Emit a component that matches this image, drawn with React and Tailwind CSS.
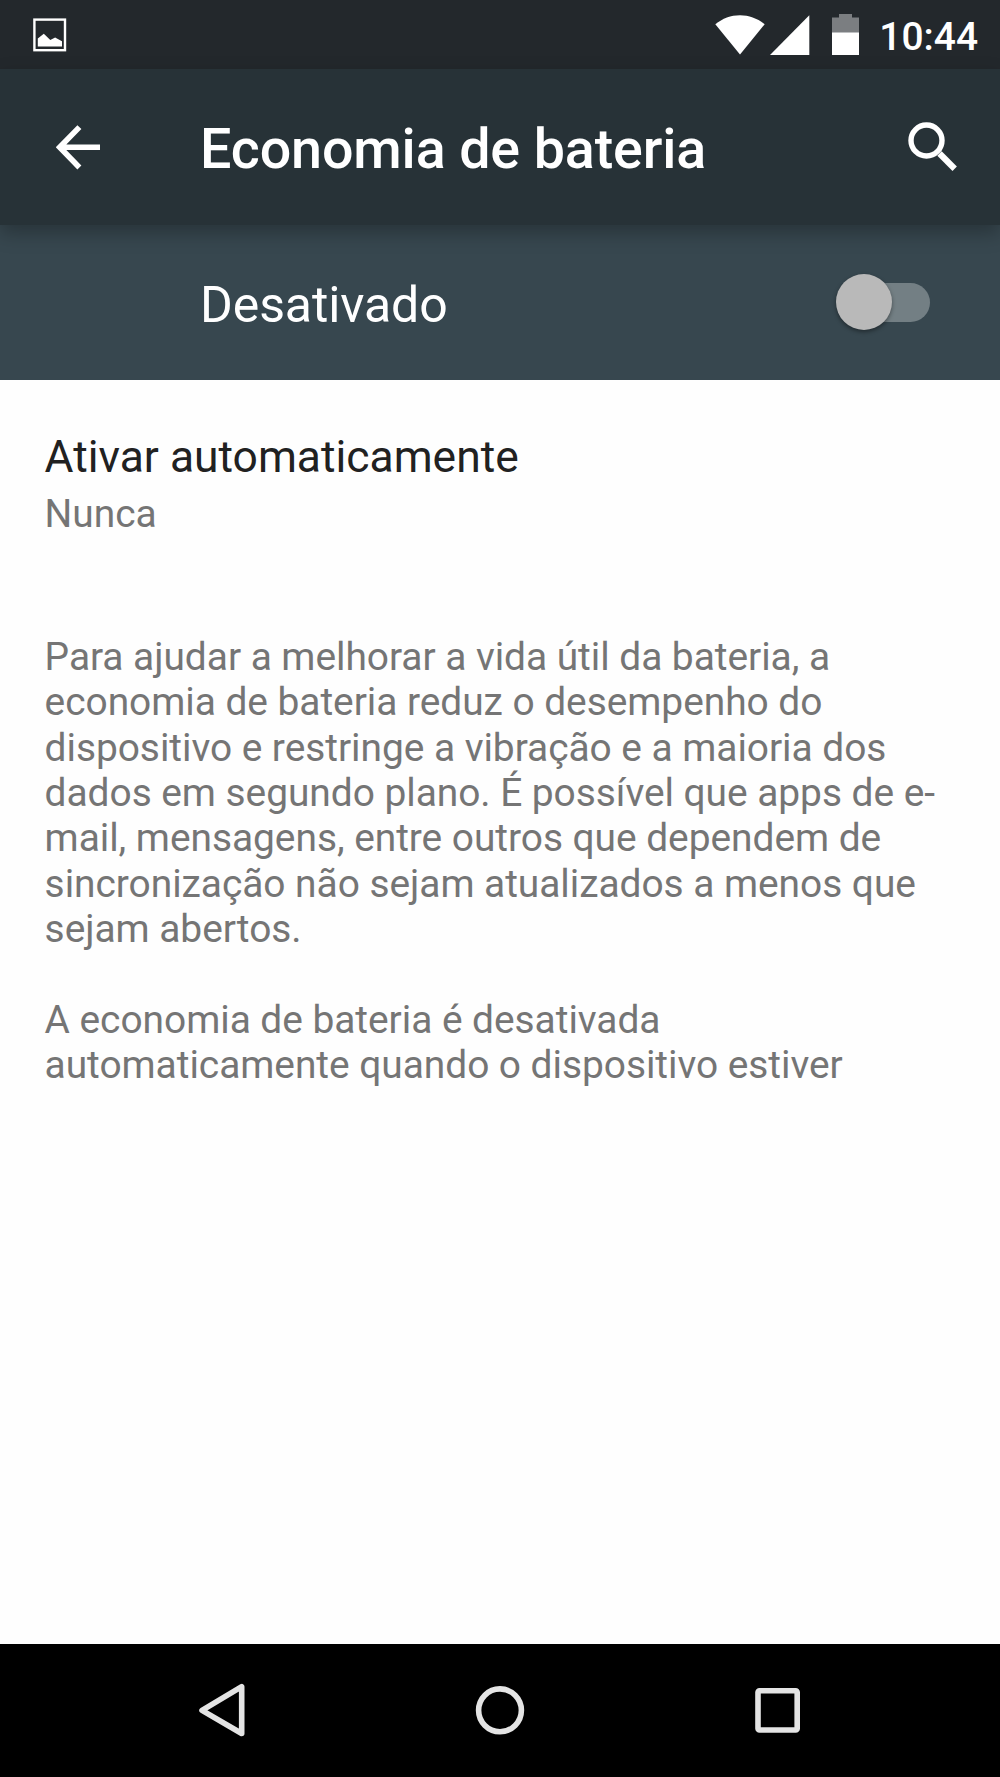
import React from 'react';

const PictureIcon = () => (
    <svg className="w-[34px] h-[34px]" viewBox="0 0 34 34" fill="none">
        <rect x="1.4" y="1.6" width="30.6" height="30.6" stroke="#fff" strokeWidth="2.4" />
        <path d="M4.800 20.500l6-4.700 6.500 6.200 4.800-2.600 6.900 3.800V28.500H4.800z" fill="#fff" />
    </svg>
);

const WifiIcon = () => (
    <svg className="w-[50px] h-10" viewBox="0 0 50 40">
        <path d="M25 39.500L.3 9.200C7.500 3.600 15.800.3 25 .3s17.500 3.300 24.700 8.900z" fill="#fff" />
    </svg>
);

const SignalIcon = () => (
    <svg className="w-10 h-10" viewBox="0 0 40 40">
        <path d="M0 40L39.300.3V40z" fill="#fff" />
    </svg>
);

const BatteryIcon = () => (
    <svg className="w-[27px] h-[41px]" viewBox="0 0 27 41">
        <path d="M7 0h13v3.500h7V19H0V3.500h7z" fill="#7b7e81" />
        <path d="M0 18.500h27V41H0z" fill="#fff" />
    </svg>
);

const BackArrow = () => (
    <svg className="w-[45px] h-[45px]" viewBox="0 0 45 45" fill="none" stroke="#fff" strokeWidth="5.600">
        <path d="M44 22.300H6M23.400 2.100L3.700 22.300 23.400 42.500" />
    </svg>
);

const SearchIcon = () => (
    <svg className="w-[50px] h-[50px]" viewBox="0 0 50 50" fill="none" stroke="#fff">
        <circle cx="18.500" cy="18.500" r="15.500" strokeWidth="5.400" />
        <path d="M31.500 31.500L46.700 46.700" strokeWidth="6.200" />
    </svg>
);

const StatusBar = () => (
    <div className="flex h-[69px] bg-[#23282c] pl-[33px] pr-[22px]">
        <div className="pt-[18px]">
            <PictureIcon />
        </div>
        <div className="flex items-start ml-auto pt-[14px]">
            <div className="pt-[1px]"><WifiIcon /></div>
            <div className="pt-[1px] ml-[5px]"><SignalIcon /></div>
            <div className="ml-[22px]"><BatteryIcon /></div>
            <span className="ml-[20px] text-[38.9px] leading-[46px] font-medium text-white">10:44</span>
        </div>
    </div>
);

const Toolbar = () => (
    <header className="relative z-10 flex h-[156px] bg-[#273237] shadow-[0_8px_18px_rgba(0,0,0,0.27)]">
        <div className="w-[200px] pl-[56px] pt-[56px]">
            <BackArrow />
        </div>
        <h1 className="pt-[44px] text-[55.6px] leading-[72px] tracking-[-0.13px] font-medium text-white">Economia de bateria</h1>
        <div className="ml-auto pt-[53px] pr-[42px]">
            <SearchIcon />
        </div>
    </header>
);

const SwitchBar = () => (
    <div className="flex h-[155px] bg-[#37474f] pl-[200px] pr-[70px]">
        <span className="pt-[50px] text-[50px] leading-[60px] tracking-[-0.1px] text-white">Desativado</span>
        <button type="button" role="switch" aria-checked="false" className="relative ml-auto mt-[49px] w-[95px] h-[56px]">
            <span className="absolute left-[10px] right-0 top-[9px] h-[39px] rounded-full bg-[#737f84]" />
            <span className="absolute left-[0.5px] top-0 size-[56px] rounded-full bg-[#b9b9b9] shadow-[0_2px_4px_rgba(0,0,0,0.4)]" />
        </button>
    </div>
);

const NavBar = () => (
    <nav className="flex h-[133px] bg-black">
        <svg className="w-[53px] h-[54px] ml-[198px] mt-[39px]" viewBox="0 0 53 54" fill="none" stroke="#e4e4e4">
            <path d="M4 27.300L43.700 3.700V50.500z" strokeWidth="5.600" strokeLinejoin="round" />
        </svg>
        <svg className="w-[50px] h-[50px] ml-[224px] mt-[41px]" viewBox="0 0 50 50" fill="none" stroke="#e4e4e4">
            <circle cx="25" cy="25.300" r="21.400" strokeWidth="5.600" />
        </svg>
        <svg className="w-[46px] h-[46px] ml-[230px] mt-[44px]" viewBox="0 0 46 46" fill="none" stroke="#e4e4e4">
            <rect x="3" y="2.800" width="39.200" height="39.200" rx="1.500" strokeWidth="5.600" />
        </svg>
    </nav>
);

const App = () => (
    <div className="flex flex-col w-[1000px] h-[1777px] bg-[#fefefe] font-['Roboto',sans-serif] overflow-hidden">
        <StatusBar />
        <Toolbar />
        <SwitchBar />
        <main className="flex-1 pl-[44.6px] pr-[44px]">
            <div className="pt-[51px]">
                <h2 className="text-[44.4px] leading-[52px] text-[#212121]">Ativar automaticamente</h2>
                <p className="pt-[8px] text-[38.9px] leading-[46px] text-[#757575]">Nunca</p>
            </div>
            <div className="pt-[97px] text-[38.9px] leading-[45.35px] tracking-[-0.04px] text-[#757575]">
                <p>
                    Para ajudar a melhorar a vida útil da bateria, a economia de bateria reduz o desempenho do
                    dispositivo e restringe a vibração e a maioria dos dados em segundo plano. É possível que
                    apps de e-mail, mensagens, entre outros que dependem de sincronização não sejam atualizados
                    a menos que sejam abertos.
                </p>
                <p className="pt-[45.35px]">
                    A economia de bateria é desativada automaticamente quando o dispositivo estiver
                </p>
            </div>
        </main>
        <NavBar />
    </div>
);

export default App;
